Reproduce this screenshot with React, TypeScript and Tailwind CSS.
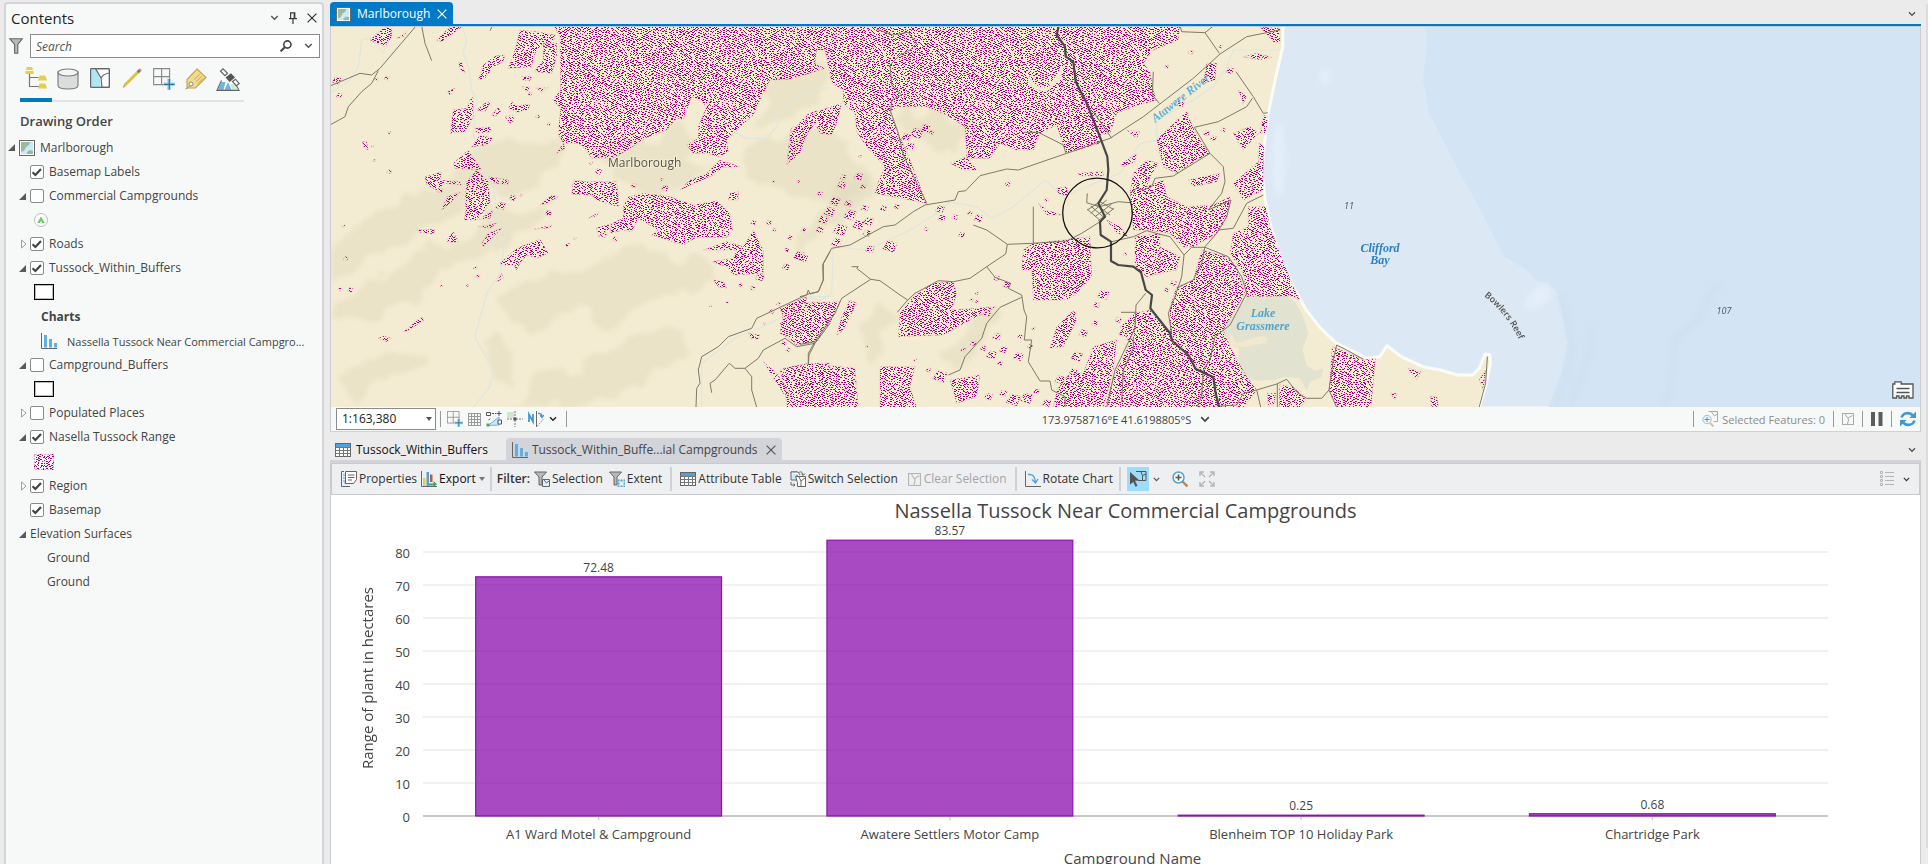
import React from "react";
import type { ReactNode } from "react";

/* ------------------------------------------------------------------ */
/* Small icons                                                         */
/* ------------------------------------------------------------------ */

type IconProps = { className?: string };

function Chevron({ className = "w-[10px] h-[7px] text-[#555]" }: IconProps) {
  return (
    <svg viewBox="0 0 10 7" className={className} fill="none" stroke="currentColor" strokeWidth="1.7">
      <path d="M1.2 1.2 5 5 8.8 1.2" />
    </svg>
  );
}

function Cross({ className = "" }: IconProps) {
  return (
    <svg viewBox="0 0 10 10" className={className} fill="none" stroke="currentColor" strokeWidth="1.2">
      <path d="M.6.6 9.4 9.4M9.4.6.6 9.4" />
    </svg>
  );
}

function PinIcon() {
  return (
    <svg viewBox="0 0 8 12" className="h-3 w-2" fill="none" stroke="#3c3c3c" strokeWidth="1.2">
      <path d="M1.6 6.4V.8h4.2v5.6M0 6.6h8M4 6.6V12M5.2 1v5.4" />
    </svg>
  );
}

function FunnelIcon() {
  return (
    <svg viewBox="0 0 14 16" className="h-4 w-[14px]" fill="#b9b9b9" stroke="#666" strokeWidth="1.1">
      <path d="M.7.7h12.6L8.8 6.5v8.8H5.6V6.5z" />
    </svg>
  );
}

function SearchIcon() {
  return (
    <svg viewBox="0 0 12 12" className="h-3 w-3" fill="none" stroke="#444">
      <circle cx="7.4" cy="4.5" r="3.6" strokeWidth="1.6" />
      <path d="M4.8 7.2.6 11.4" strokeWidth="2" />
    </svg>
  );
}

function DrawingOrderIcon() {
  return (
    <svg viewBox="0 0 24 24" className="h-6 w-6" fill="#e3cf4d">
      <path d="M5.500 8v12.500H15M5.500 11.500h9" fill="none" stroke="#777" strokeWidth="1.2" />
      <path d="M2.800 1h5.400l.8 3H2zM1.400 5h8.200v3H1.400z" />
      <path d="M15.600 9.500h5.800l1.600 5h-9zM15.600 17.500h5.800l1.600 5h-9z" />
    </svg>
  );
}

function DatabaseIcon() {
  return (
    <svg viewBox="0 0 22 22" className="h-[22px] w-[22px]" fill="#dcdcdc" stroke="#777" strokeWidth="1.1">
      <path d="M1 4v13.500c0 2 4 3.500 10 3.500s10-1.500 10-3.500V4z" />
      <ellipse cx="11" cy="4.500" rx="10" ry="3.500" fill="#f5f5f5" />
    </svg>
  );
}

function SelectionMapIcon() {
  return (
    <svg viewBox="0 0 20 20" className="h-5 w-5" fill="none" stroke="#666" strokeWidth="1.2">
      <rect x=".6" y=".6" width="18.800" height="18.800" rx="1" fill="#fff" />
      <path d="M1 1h4.500l4 8 1.500 10.400H1z" fill="#aee6f7" stroke="none" />
      <path d="M5.500.6 11 10l1 9M11 10c2-3.500 5-4.500 8.500-5" />
      <rect x=".6" y=".6" width="18.800" height="18.800" rx="1" />
    </svg>
  );
}

function PencilIcon() {
  return (
    <svg viewBox="0 0 22 22" className="h-[22px] w-[22px]" strokeLinecap="butt">
      <path d="M4 17 17.500 3.500" stroke="#dcc23c" strokeWidth="3" />
      <path d="M16.800 4.200l2.200-2.200" stroke="#777" strokeWidth="3" />
      <path d="M18.700 2.400l1.200-1.200" stroke="#e88b7c" strokeWidth="3" />
      <path d="M3 16l2 2-3.500 2.500z" fill="#c9a183" />
    </svg>
  );
}

function SnapGridIcon({ className = "h-[22px] w-[22px]" }: IconProps) {
  return (
    <svg viewBox="0 0 22 22" className={className} fill="none">
      <path d="M.6.6h16v16h-16zM8.600.6v16M.6 8.600h16" stroke="#888" strokeWidth="1.100" />
      <path d="M16 10.500v11.500M10.500 16.300H22" stroke="#9fd8f5" strokeWidth="3.600" />
      <path d="M16.300 11v10.500M11 16.300h10.500" stroke="#2d6f9c" strokeWidth="1.200" />
    </svg>
  );
}

function TagIcon() {
  return (
    <svg viewBox="0 0 22 22" className="h-[22px] w-[22px]">
      <path d="M12 1 21 9.500 10.500 20H2v-8.500z" fill="#f0dc8c" stroke="#c9a64c" strokeWidth="1.200" />
      <path d="M9 11.500l5.500-5M11 13.500l5.500-5M13 15.500l5-5" stroke="#c9a64c" />
      <circle cx="6" cy="16" r="2" fill="#fff" stroke="#888" />
      <path d="M5 17.500C3 20 1 21 .6 21" stroke="#888" fill="none" />
    </svg>
  );
}

function SatelliteIcon() {
  return (
    <svg viewBox="0 0 24 24" className="h-6 w-6" fill="none" stroke="#666" strokeWidth="1.200">
      <path d="M5.500 12.500 1 22.400h22l-3.500-6.500" fill="#fff" />
      <path d="M5.500 14h4l-2 8H2zM12 14l3.500 8H8.500z" fill="#6db5e5" stroke="none" />
      <path d="M14.500 16h4l4 6h-6z" fill="#c8e9d8" stroke="none" />
      <path d="M1 22.400h22" />
      <path d="M9.500 9.500l5.500-4.300 4 4.300-5.300 4.500z" fill="#555" stroke="none" />
      <path d="M4.500 3.300 7 .9l4.500 4.300L9 7.600zM16.500 13.500l3-2.300 3.800 4.300-3 2.300z" fill="#fff" />
    </svg>
  );
}

function MapTile({ className = "h-4 w-4" }: IconProps) {
  return (
    <svg viewBox="0 0 16 16" className={className}>
      <rect x=".5" y=".5" width="15" height="15" fill="#fff" stroke="#666" />
      <rect x="2" y="2" width="12" height="12" fill="#cfe8f7" />
      <path d="M2 2h9l-1 3-3 2-2 4-3 1zM8 12l3-2 3 1v3H8z" fill="#96bd9d" />
    </svg>
  );
}

function ColumnsIcon({ className = "h-4 w-4" }: IconProps) {
  return (
    <svg viewBox="0 0 16 16" className={className} fill="none">
      <path d="M.5 0v15.500H16" stroke="#666" />
      <path d="M3 2h3v12.500H3zM8 6h3v8.500H8zM13 10h3v4.500h-3z" fill="#61aee0" />
    </svg>
  );
}

function TableIcon() {
  return (
    <svg viewBox="0 0 16 14" className="h-[14px] w-4 shrink-0" fill="none">
      <rect x=".5" y=".5" width="15" height="13" fill="#fff" stroke="#666" />
      <path d="M1 1h14v3H1z" fill="#4fa3da" />
      <path d="M.5 4.500h15M.5 7.500h15M.5 10.500h15M4.500 4v10M8.500 4v10M12.500 4v10" stroke="#777" />
    </svg>
  );
}

function SelTile({ className = "h-3 w-3", stroke = "#aaa" }: IconProps & { stroke?: string }) {
  return (
    <svg viewBox="0 0 12 12" className={className} fill="none" stroke={stroke}>
      <rect x=".5" y=".5" width="11" height="11" />
      <path d="M3.500 1c0 3 3 3 3 6L5.500 11M6 5 10.500 2.500" />
    </svg>
  );
}

/* ------------------------------------------------------------------ */
/* Contents pane                                                       */
/* ------------------------------------------------------------------ */

function Expander({ open }: { open: boolean }) {
  return (
    <button aria-label={open ? "Collapse" : "Expand"} className="flex h-4 w-[11px] shrink-0 items-center">
      {open ? (
        <svg viewBox="0 0 7 7" className="h-[7px] w-[7px]" fill="#595959">
          <path d="M7 0v7H0z" />
        </svg>
      ) : (
        <svg viewBox="0 0 6 10" className="ml-[2px] h-[10px] w-[6px]" fill="#fff" stroke="#999">
          <path d="M.6 1v8l4.400-4z" />
        </svg>
      )}
    </button>
  );
}

function Layer({ name, checked, open }: { name: string; checked: boolean; open?: boolean }) {
  return (
    <li className="flex h-6 items-center pl-[13px]">
      {open === undefined ? <span className="w-[11px] shrink-0" /> : <Expander open={open} />}
      <label className="flex items-center gap-[5px]">
        <span className="relative flex">
          <input
            type="checkbox"
            defaultChecked={checked}
            className="peer h-[14px] w-[14px] appearance-none rounded-[2px] border border-[#8a8a8a] bg-white"
          />
          <svg
            viewBox="0 0 14 14"
            className="pointer-events-none absolute inset-0 hidden h-[14px] w-[14px] peer-checked:block"
            fill="none"
            stroke="#444"
            strokeWidth="2.200"
          >
            <path d="M2.600 7.200 5.400 10 11 4" />
          </svg>
        </span>
        {name}
      </label>
    </li>
  );
}

function BoxSymbol() {
  return (
    <li className="flex h-6 items-center pl-7">
      <svg viewBox="0 0 20 16" className="h-4 w-5" fill="none">
        <rect x=".5" y=".5" width="19" height="15" fill="#fff" stroke="#000" />
        <rect x="1.500" y="1.500" width="17" height="13" stroke="#bbb" />
      </svg>
    </li>
  );
}

const paneTools: { label: string; icon: ReactNode }[] = [
  { label: "List By Drawing Order", icon: <DrawingOrderIcon /> },
  { label: "List By Data Source", icon: <DatabaseIcon /> },
  { label: "List By Selection", icon: <SelectionMapIcon /> },
  { label: "List By Editing", icon: <PencilIcon /> },
  { label: "List By Snapping", icon: <SnapGridIcon /> },
  { label: "List By Labeling", icon: <TagIcon /> },
  { label: "List By Perspective Imagery", icon: <SatelliteIcon /> },
];

function ContentsPane() {
  return (
    <aside className="mt-[2px] ml-1 flex w-[320px] shrink-0 flex-col rounded-t-[4px] border-2 border-b-0 border-[#d3d5d9] bg-[#f7f9f9]">
      <header className="flex h-[30px] items-center pr-[5px] pb-[2px] pl-[5px]">
        <h1 className="flex-1 text-[15px] text-[#1f1f1f]">Contents</h1>
        <button aria-label="Pane options">
          <Chevron className="h-[6px] w-[9px] text-[#555]" />
        </button>
        <button aria-label="Auto hide" className="ml-[10px]">
          <PinIcon />
        </button>
        <button aria-label="Close pane" className="ml-[10px]">
          <Cross className="h-[10px] w-[10px] text-[#333]" />
        </button>
      </header>

      <div className="flex items-center gap-[7px] pr-[2px] pl-[3px]">
        <FunnelIcon />
        <div className="flex h-6 flex-1 items-center border border-[#8b8b8b] bg-white pr-[6px] pl-[5px]">
          <input
            type="text"
            aria-label="Search layers"
            placeholder="Search"
            className="w-0 flex-1 bg-transparent text-[12px] italic outline-none placeholder:text-[#555]"
          />
          <button aria-label="Search">
            <SearchIcon />
          </button>
          <button aria-label="Search options" className="ml-3">
            <Chevron className="h-[6px] w-[9px] text-[#555]" />
          </button>
        </div>
      </div>

      <nav className="mt-2 ml-[14px] flex">
        {paneTools.map((tool, i) => (
          <button
            key={tool.label}
            aria-label={tool.label}
            className={
              i === 0
                ? "flex h-9 w-8 items-start justify-center border-b-4 border-[#0079c1]"
                : "flex h-9 w-8 items-start justify-center border-b-2 border-[#e2e4e4] pt-[2px]"
            }
          >
            {tool.icon}
          </button>
        ))}
      </nav>

      <h2 className="mt-[9px] ml-[14px] text-[13px] leading-5 font-semibold text-[#444]">Drawing Order</h2>

      <ul className="mt-1 text-[12px] text-[#444]">
        <li className="flex h-[25px] items-center pl-[2px]">
          <Expander open />
          <MapTile />
          <span className="ml-[5px]">Marlborough</span>
        </li>
        <Layer name="Basemap Labels" checked />
        <Layer name="Commercial Campgrounds" checked={false} open />
        <li className="flex h-6 items-center pl-7">
          <svg viewBox="0 0 14 14" className="h-[14px] w-[14px]">
            <circle cx="7" cy="7" r="6.500" fill="#fff" stroke="#bbb" />
            <path d="M7 3.500 10.800 10H8.200L7 7.800 5.800 10H3.200z" fill="#6ccb5f" />
          </svg>
        </li>
        <Layer name="Roads" checked open={false} />
        <Layer name="Tussock_Within_Buffers" checked open />
        <BoxSymbol />
        <li className="flex h-[25px] items-center pl-[35px] font-bold">Charts</li>
        <li className="flex h-6 items-center gap-[10px] pl-[35px] text-[11px]">
          <ColumnsIcon className="h-4 w-4 shrink-0" />
          <span className="whitespace-nowrap">Nassella Tussock Near Commercial Campgro...</span>
        </li>
        <Layer name="Campground_Buffers" checked={false} open />
        <BoxSymbol />
        <Layer name="Populated Places" checked={false} open={false} />
        <Layer name="Nasella Tussock Range" checked open />
        <li className="flex h-[25px] items-center pl-7">
          <svg viewBox="0 0 20 16" className="h-4 w-5" shapeRendering="crispEdges">
            <rect width="20" height="16" fill="#fff" />
            <path d={SWATCH_DOTS} fill="#a80084" />
            <rect x=".5" y=".5" width="19" height="15" fill="none" stroke="#e6a0c4" strokeDasharray="2 1" />
          </svg>
        </li>
        <Layer name="Region" checked open={false} />
        <Layer name="Basemap" checked />
        <li className="flex h-6 items-center pl-[13px] font-medium">
          <Expander open />
          Elevation Surfaces
        </li>
        <li className="flex h-6 items-center pl-[41px]">Ground</li>
        <li className="flex h-6 items-center pl-[41px]">Ground</li>
      </ul>
    </aside>
  );
}

/* ------------------------------------------------------------------ */
/* Map                                                                 */
/* ------------------------------------------------------------------ */

/** Deterministic stipple of one-pixel-high dashes, as path data. */
function stipple(width: number, height: number, seed: number): string {
  let s = seed;
  const rnd = () => {
    s = (s + 0x6d2b79f5) | 0;
    let t = Math.imul(s ^ (s >>> 15), 1 | s);
    t = (t + Math.imul(t ^ (t >>> 7), 61 | t)) ^ t;
    return ((t ^ (t >>> 14)) >>> 0) / 4294967296;
  };
  let prev = new Set<number>();
  let d = "";
  for (let y = 0; y < height; y++) {
    const row = new Set<number>();
    let x = Math.floor(rnd() * 4);
    while (x < width) {
      const len = rnd() < 0.5 ? 2 : 1;
      let clash = false;
      for (let k = 0; k < len; k++) if (prev.has(x + k)) clash = true;
      if ((!clash || rnd() < 0.12) && x + len <= width) {
        d += `M${x} ${y}h${len}v1h-${len}z`;
        for (let k = 0; k < len; k++) row.add(x + k);
        x += len + 1 + Math.floor(rnd() * 4);
      } else {
        x += 1 + Math.floor(rnd() * 4);
      }
    }
    prev = row;
  }
  return d;
}

const DOTS = stipple(128, 128, 7);
const SWATCH_DOTS = stipple(20, 16, 11);

/** Digitising sheets: each has its own origin and units per pixel. */
const sheet = (originX: number, unitsX: number) => (points: string) =>
  points
    .split(" ")
    .map((p) => {
      const [x, y] = p.split(",").map(Number);
      return `${(originX + x / unitsX).toFixed(1)},${(y / 3).toFixed(1)}`;
    })
    .join(" ");

const west = sheet(330, 3);
const centre = sheet(800, 3);
const east = sheet(1250, 2.313);

const sea = east(
  "76,75 76,140 60,230 42,340 32,450 28,520 35,600 48,680 70,770 100,860 130,930 160,980 200,1030 240,1055 270,1075 300,1070 317,1037 350,1070 400,1100 440,1110 480,1125 515,1125 530,1105 544,1062 555,1064 556,1090 547,1150 530,1224 3600,1224 3600,75",
);
const deepSea = east(
  "405,75 410,130 400,240 415,340 450,430 490,530 530,620 560,700 590,770 640,810 662,842 690,850 712,880 722,940 735,1030 722,1110 690,1224 3600,1224 3600,75",
);
const lake = centre(
  "1340,890 1460,888 1485,905 1510,950 1525,1000 1508,1050 1520,1095 1545,1112 1570,1105 1565,1130 1530,1145 1520,1172 1500,1135 1455,1130 1420,1140 1375,1142 1330,1130 1315,1085 1318,1045 1290,1035 1278,1000 1262,1010 1290,960 1310,935",
);

const hills: string[] = [
  west("0,740 80,680 180,600 330,555 420,470 560,400 670,420 690,500 620,540 500,580 380,640 240,720 100,800 0,820"),
  west("0,880 160,830 300,750 420,700 500,620 660,580 640,640 500,720 360,800 240,900 60,980 0,960"),
  west("520,900 640,840 720,800 840,770 960,745 1080,800 1180,850 1120,880 980,890 860,960 740,940 640,985 560,960"),
  west("800,480 900,440 1000,400 1060,370 1100,400 1060,450 1150,500 1050,570 950,590 880,560 820,520"),
  west("1290,330 1320,250 1420,235 1490,210 1500,270 1400,300 1330,360 1260,390"),
  west("1230,460 1330,420 1400,360 1480,380 1560,460 1640,520 1560,620 1440,600 1300,560"),
  west("0,1130 120,1080 260,1060 300,1090 200,1150 60,1200"),
  west("440,1060 500,1010 560,1050 540,1120 470,1110"),
  west("560,1220 640,1120 760,1080 900,1020 1080,1000 1090,1060 960,1120 860,1180 720,1220"),
  centre("300,330 400,330 480,380 490,460 420,470 340,420"),
  centre("40,640 120,560 220,500 240,560 180,620 80,700 0,740"),
  centre("400,1100 460,1020 540,960 600,930 600,1000 520,1100"),
  centre("240,900 300,960 250,1080 210,1080 200,980"),
];

const tussockBlocks: string[] = [
  west("672,78 690,110 692,270 668,300 692,325 684,400 700,430 745,430 765,445 785,475 855,472 900,445 945,415 1010,390 1040,355 1060,358 1085,290 1110,300 1130,320 1105,380 1105,415 1070,435 1090,460 1130,460 1170,470 1195,455 1190,420 1230,380 1270,345 1290,300 1320,240 1380,238 1440,220 1485,205 1450,190 1460,145 1490,150 1530,78"),
  centre("-10,78 770,78 1140,78 1135,120 1060,150 1030,190 1050,215 1060,270 1070,300 1000,320 950,340 930,400 900,405 900,430 800,460 790,435 770,375 720,400 700,450 650,450 600,430 570,475 500,475 495,380 440,345 380,320 290,320 270,335 295,400 330,480 380,610 330,600 225,580 235,545 255,500 200,440 170,395 165,340 130,310 130,270 95,250 85,200 75,150 50,150 45,195 0,215"),
  centre("20,345 125,310 110,370 95,405 60,400 45,370 10,420 0,440 -40,495 -30,400"),
  centre("1160,335 1180,385 1205,430 1230,460 1190,480 1130,520 1090,500 1070,420 1110,380"),
  centre("1040,480 1075,490 1050,530 1040,560 1090,540 1100,590 1160,620 1240,615 1290,590 1280,660 1250,700 1180,740 1150,740 1110,700 1040,690 1000,690 990,580 1000,520"),
  centre("1300,400 1350,380 1375,400 1330,450"),
  centre("1300,550 1370,490 1390,480 1390,570 1330,600"),
  centre("1165,540 1260,520 1250,545 1180,560"),
  centre("1345,620 1398,620 1410,680 1440,760 1480,860 1500,900 1470,888 1340,890 1330,820 1290,760 1300,700 1345,680"),
  centre("1205,750 1280,770 1310,800 1335,880 1270,990 1290,1040 1340,1130 1370,1170 1330,1222 1200,1222 1210,1120 1170,1080 1110,1000 1110,920 1130,860 1180,840"),
  centre("1005,710 1080,700 1080,820 1040,830 1005,800"),
  centre("1080,740 1140,770 1130,810 1080,820"),
  centre("700,730 870,710 875,830 830,880 800,900 700,900 695,810 665,810 670,750"),
  centre("400,850 460,845 470,880 455,930 590,920 510,960 430,1005 295,1010 300,940 340,890"),
  centre("0,910 120,905 95,960 50,1025 0,1035 -60,1000 -50,940"),
  centre("150,900 170,910 130,990 110,1005 125,950"),
  centre("-50,1105 25,1090 165,1105 175,1222 -40,1222"),
  centre("240,1100 345,1100 330,1160 350,1222 240,1222"),
  centre("450,1140 540,1125 530,1190 470,1210"),
  centre("815,935 830,960 790,1040 750,1045 770,980"),
  centre("880,1040 950,1020 940,1110 910,1222 760,1222 770,1170 810,1120 850,1120"),
  centre("960,980 1005,940 1050,930 1100,990 1160,1060 1190,1110 1240,1130 1255,1222 915,1222 940,1130 990,1030"),
  centre("1380,81 1440,85 1440,130 1420,125"),
  centre("1330,170 1370,160 1415,172 1380,180"),
  centre("1315,270 1340,290 1330,310"),
  centre("1220,190 1250,190 1245,240 1210,250"),
  centre("1378,430 1392,440 1388,520 1375,500"),
  centre("1390,345 1402,350 1400,400 1380,400"),
  centre("980,390 1020,395 1010,415"),
  centre("960,495 1010,460 1005,485 970,500"),
  centre("835,520 910,515 910,527 840,527"),
  centre("450,490 500,470 530,510 490,510"),
  centre("770,565 800,560 805,590 775,580"),
  centre("715,610 740,630 785,645 740,645"),
  centre("920,660 960,680 985,710 950,700"),
  east("190,1040 230,1060 262,1080 290,1075 280,1222 200,1222 183,1170"),
  east("68,1155 100,1160 130,1200 115,1222 68,1222"),
  east("40,1180 60,1180 55,1215 42,1215"),
  east("530,1140 545,1110 540,1170"),
  east("365,1105 395,1115 385,1140"),
  east("417,1190 432,1190 436,1220 420,1220"),
  east("325,1180 340,1180 335,1200"),
  west("120,120 155,88 185,78 185,110 165,140"),
  west("200,115 230,95 220,110"),
  west("320,120 350,90 365,78 395,81 370,100 335,125"),
  west("570,90 620,95 675,105 670,130 640,130 615,160 605,200 535,205 555,150"),
  west("640,130 680,130 680,170 665,220 612,215 640,180"),
  west("445,240 460,195 495,168 525,165 520,185 490,200 465,235"),
  west("385,190 395,185 405,220 392,210"),
  west("575,228 605,230 600,242 578,240"),
  west("575,260 600,262 590,275"),
  west("620,265 655,263 635,277"),
  west("352,275 375,265 360,285"),
  west("370,330 410,325 420,300 430,290 430,350 405,395 360,400"),
  west("440,330 470,305 480,310 465,335"),
  west("485,345 505,322 512,335 495,350"),
  west("535,325 545,305 560,318 600,312 595,330 560,337"),
  west("525,350 550,345 552,362 540,370"),
  west("435,385 480,382 485,395 440,400"),
  west("425,440 450,405 490,415 470,435"),
  west("370,490 415,450 435,480 455,510 375,505"),
  west("285,530 335,515 330,540 390,545 395,555 345,550 320,570 290,555"),
  west("405,600 410,545 440,510 475,545 480,610 440,660 403,660 408,630"),
  west("475,530 535,540 535,555 485,548"),
  west("335,630 350,590 390,577 360,610"),
  west("445,660 490,630 480,655"),
  west("445,680 500,670 480,685"),
  west("455,730 475,700 515,685 490,710 460,740"),
  west("260,690 315,688 310,702 268,697"),
  west("350,720 370,695 385,725 355,728"),
  west("510,790 560,745 630,718 655,760 620,775 590,765 570,790 560,810 550,795 515,795"),
  west("500,845 515,820 520,835"),
  west("730,540 770,545 860,545 865,590 865,620 800,600 785,585 725,583"),
  west("880,620 895,590 940,580 1020,590 1090,615 1160,603 1200,640 1208,690 1190,712 1100,712 1060,735 965,705 985,690 950,670 925,655 905,695 880,690 840,700 845,670 880,655"),
  west("1050,570 1080,540 1130,520 1170,480 1230,500 1180,502 1150,525"),
  west("1120,750 1190,725 1240,740 1270,690 1300,750 1300,820 1210,825 1190,800 1145,785 1210,775 1220,750"),
  west("1150,840 1180,845 1190,865 1165,860"),
  west("680,460 700,430 705,445"),
  west("630,615 665,585 685,590 645,612"),
  west("800,683 850,670 840,685 805,712"),
  west("775,655 805,638 800,648"),
  west("612,688 665,675 660,684"),
  west("220,995 275,950 282,960 235,992"),
  west("145,1015 160,1008 185,1015 170,1025"),
  west("97,425 110,425 115,450 103,445"),
  west("1255,1000 1290,1005 1285,1018 1262,1015"),
  west("1350,925 1430,890 1425,930 1360,950"),
  west("1350,970 1450,905 1500,910 1500,960 1450,1020 1400,1035 1370,1010"),
  west("1350,1110 1440,1090 1500,1090 1500,1222 1390,1222 1360,1150"),
  west("1300,1085 1340,1120 1400,1210 1360,1180"),
  west("1375,490 1400,440 1420,400 1430,345 1460,330 1440,380 1410,460"),
  west("1195,600 1200,580 1225,575 1225,600 1205,600"),
];

/** Isolated patches: x, y and half-width in sheet units. */
const westSpecks: [number, number, number][] = [
  [28, 287, 9], [20, 242, 14], [140, 238, 6], [170, 234, 8], [600, 282, 6], [623, 350, 7], [657, 373, 6],
  [178, 398, 5], [128, 440, 4], [132, 481, 4], [178, 515, 8], [330, 572, 9], [548, 594, 11], [574, 587, 5],
  [512, 618, 15], [655, 640, 11], [41, 678, 5], [47, 776, 8], [60, 870, 9], [30, 867, 5], [436, 804, 6],
  [444, 830, 7], [335, 858, 4], [412, 857, 4], [713, 735, 7], [735, 715, 5], [805, 515, 11], [783, 490, 5],
  [911, 557, 9], [1005, 565, 11], [995, 539, 5], [855, 717, 9], [820, 704, 11], [1330, 545, 4], [1405, 545, 5],
  [1392, 388, 11], [1270, 668, 8], [1317, 668, 9], [1333, 690, 6], [1420, 690, 8], [1380, 713, 8],
  [1370, 750, 7], [1408, 768, 18], [1368, 801, 12], [1232, 855, 7], [1290, 832, 14], [1268, 865, 8],
  [1142, 918, 4], [1192, 907, 4], [1345, 912, 6], [1325, 935, 8], [1303, 970, 4], [1375, 1050, 8], [1360, 1030, 8],
];
const centreSpecks: [number, number, number][] = [
  [350, 400, 20], [375, 385, 16], [318, 412, 14], [330, 440, 14], [395, 397, 8], [180, 470, 5], [175, 530, 14],
  [125, 555, 14], [60, 582, 9], [130, 532, 10], [190, 560, 9], [105, 605, 16], [145, 610, 12], [88, 635, 18],
  [150, 645, 20], [175, 675, 18], [120, 690, 22], [70, 660, 16], [205, 665, 16], [195, 625, 12], [110, 728, 16],
  [60, 690, 12], [200, 700, 12], [250, 625, 10], [290, 620, 9], [270, 740, 22], [210, 748, 14], [10, 775, 14],
  [420, 628, 14], [425, 655, 12], [465, 652, 10], [510, 640, 8], [535, 655, 14], [378, 688, 7], [485, 705, 10],
  [622, 553, 9], [740, 600, 7], [590, 835, 10], [620, 855, 12], [530, 880, 5], [515, 900, 6], [530, 905, 5],
  [910, 885, 18], [890, 915, 10], [885, 970, 10], [850, 1000, 14], [830, 1070, 18], [820, 940, 8], [590, 1010, 14],
  [610, 1050, 12], [575, 1065, 16], [550, 1045, 10], [520, 1030, 10], [490, 1050, 8], [655, 1070, 16],
  [690, 1040, 8], [600, 1090, 8], [420, 1130, 22], [385, 1110, 8], [565, 1190, 13], [610, 1180, 12],
  [640, 1200, 22], [680, 1195, 20], [710, 1175, 10], [740, 1210, 14], [200, 1040, 4], [345, 1080, 5],
  [780, 1140, 16], [820, 1115, 12], [970, 1000, 14], [975, 763, 6], [1172, 157, 8], [1262, 140, 6],
  [1290, 212, 12], [1270, 390, 8], [1220, 400, 10], [1240, 415, 10], [1140, 310, 14], [1100, 200, 6],
  [560, 940, 14], [700, 985, 6], [660, 1010, 8], [955, 960, 10], [1100, 870, 8], [1120, 850, 10],
];
const diamonds = (list: [number, number, number][], place: (p: string) => string) =>
  list.map(([x, y, r]) =>
    place(`${x - r},${y + r / 3} ${x - r / 3},${y - r * 0.8} ${x + r},${y - r / 2} ${x + r / 2},${y + r * 0.8}`),
  );

const tussock = [...tussockBlocks, ...diamonds(westSpecks, west), ...diamonds(centreSpecks, centre)];

const clearings: string[] = [
  centre("680,215 700,250 720,262 745,262 775,215 795,190 780,240 740,275 705,270 688,250"),
  west("620,150 638,130 635,170 620,190"),
];

const highway = centre(
  "776,78 770,105 795,140 797,170 820,185 827,245 858,305 890,385 922,470 925,510 920,570 895,610 915,650 900,665 902,705 933,725 933,783 955,795 1000,800 1023,817 1037,870 1056,885 1051,925 1110,1000 1117,1023 1165,1065 1187,1107 1240,1132 1247,1180 1258,1224",
);

const roads: string[] = [
  centre("0,890 20,885 25,870 30,882 55,875 70,840 70,790 95,745 150,735 250,680 285,675 340,635 375,615 465,600 475,575 497,572 540,527 620,507 655,510 800,460 930,415 1030,350 1180,235 1260,162 1340,110 1440,90"),
  centre("230,88 280,105 325,97 350,130 330,150 300,165 270,195 275,255 305,285 275,300 272,335 295,400 310,465 380,610"),
  centre("520,675 560,690 622,733 700,730 800,723 845,700 900,665"),
  centre("622,733 617,762 560,800 510,835 460,845 415,842 345,880 323,900 292,937"),
  centre("155,800 175,800 170,805 212,838 125,895 105,940 45,1025 25,1060 25,1095"),
  centre("212,838 240,842 300,885 323,900"),
  centre("45,1025 0,1033"),
  centre("560,800 585,832 632,850 625,865 665,885 672,930 680,950 673,1020 695,1020 685,1085 720,1143 750,1143 755,1170 795,1190 795,1222"),
  centre("665,892 600,922 560,970 545,1015 495,1070 480,1110 445,1125"),
  centre("670,397 715,397 790,435 798,460"),
  centre("935,415 880,335"),
  centre("700,620 700,730"),
  centre("1060,215 1057,285 1078,310"),
  centre("1140,78 1145,95 1215,98 1258,160"),
  centre("1215,98 1240,78"),
  centre("1308,215 1360,290 1390,340 1403,338"),
  centre("1357,295 1340,320 1255,365 1183,382 1230,460 1120,528 1065,535 1055,560 1030,570 1010,565 990,580"),
  centre("1230,460 1270,500 1275,545 1265,580 1225,630 1293,600 1280,650 1250,700 1215,740 1205,790 1180,840 1130,865"),
  centre("935,725 1000,710 1040,692 1080,703 1110,710 1152,765 1175,742 1215,742 1285,770 1325,830 1340,880 1290,975 1245,1010 1230,1080 1210,1110 1205,1190 1190,1222"),
  centre("1152,765 1145,830 1125,890 1105,940 1115,1000"),
  centre("1037,880 1008,915 1005,985 945,1110 920,1222"),
  centre("1000,1010 1000,1045 970,1110 965,1205"),
  centre("963,937 1010,937"),
  centre("1255,690 1300,685 1340,610 1390,585"),
  centre("1260,1218 1310,1215 1330,1180 1370,1170 1430,1152 1460,1138 1492,1178 1520,1195 1565,1195 1587,1170 1600,1080 1610,1035 1640,1050 1690,1078"),
  centre("1370,1170 1382,1222"),
  centre("1432,1152 1432,1222"),
  centre("1587,1170 1610,1222"),
  east("549,1070 545,1150 530,1222"),
  centre("862,580 860,608 898,620 955,605 990,608"),
  west("258,78 150,205 125,225 90,220 0,258"),
  west("145,212 125,250 95,275 55,320 45,350 0,375"),
  west("275,78 285,130 305,182"),
  west("487,78 480,92"),
  west("1500,755 1478,795 1480,840 1465,875 1435,882 1280,955 1265,985 1195,1010 1165,1040 1115,1070 1105,1110 1110,1150 1100,1165 1098,1222"),
  west("1145,1178 1140,1150 1155,1140 1198,1090 1215,1105 1245,1105 1285,1075 1300,1050 1365,1015 1400,1040 1455,1030 1500,970"),
  west("1245,1105 1265,1130 1265,1170 1280,1222"),
  west("1455,1030 1437,1065 1435,1095"),
];

const streets: string[] = [
  centre("862,628 905,665"), centre("872,618 915,655"), centre("885,612 930,645"), centre("900,605 940,628"),
  centre("862,630 900,605"), centre("872,640 920,600"), centre("885,650 935,612"), centre("895,662 942,625"),
];

const rivers: string[] = [
  west("395,78 410,120 400,160 415,200 425,270 440,300 430,400 450,480 490,560 500,650 525,720 510,820 470,880 435,1010 490,1110 480,1160 430,1222"),
  west("0,280 60,240 85,200 95,120 120,115 160,158 185,110"),
  west("1220,400 1250,415 1310,415 1340,380 1350,330 1390,300 1440,270 1500,262"),
  west("1115,1222 1115,1090 1220,1010 1300,980 1380,940 1440,890 1500,890"),
  centre("0,890 60,900 95,880 100,740 200,750 330,690 410,640 450,605 530,620 575,655 640,620 735,540 790,590 860,560 960,520 1020,430 1070,420 1070,360 1180,300 1240,260 1280,200 1300,150 1440,150"),
];

const seaFloor: string[] = [
  east("715,880 735,960 745,1050 730,1140 705,1224"),
  east("790,980 785,1060 760,1150 740,1224"),
  east("1090,845 1060,890 1040,960 985,1010 975,1130 960,1224"),
];

function MapLabel(props: React.SVGProps<SVGTextElement>) {
  return (
    <text
      fontFamily="'Liberation Serif', serif"
      fontSize="12"
      fontStyle="italic"
      fontWeight="bold"
      textAnchor="middle"
      {...props}
    />
  );
}

function MapCanvas() {
  return (
    <div className="relative h-[380px] overflow-hidden bg-[#d4e4f4]">
      <svg viewBox="331 27 1589 380" preserveAspectRatio="xMinYMin slice" className="h-full w-full" role="img" aria-label="Marlborough map">
        <defs>
          <pattern id="tussock" width="128" height="128" patternUnits="userSpaceOnUse">
            <path d={DOTS} fill="#a80084" shapeRendering="crispEdges" />
          </pattern>
          <filter id="relief" filterUnits="userSpaceOnUse" x="331" y="27" width="760" height="380">
            <feTurbulence type="fractalNoise" baseFrequency=".022" numOctaves="4" seed="4" result="noise" />
            <feDisplacementMap in="SourceGraphic" in2="noise" scale="46" xChannelSelector="R" yChannelSelector="G" />
            <feGaussianBlur stdDeviation="2.500" />
          </filter>
          <filter id="faint" x="-50%" y="-20%" width="200%" height="140%">
            <feGaussianBlur stdDeviation="3" />
          </filter>
          <path id="reef" d="M1484 296Q1508 315 1520 342" />
        </defs>

        <rect x="331" y="27" width="1589" height="380" fill="#f4ecd2" />
        <g fill="#e2dabd" fillOpacity=".5" filter="url(#relief)">
          {hills.map((p, i) => (
            <polygon key={i} points={p} />
          ))}
        </g>
        <g fill="none" stroke="#dfe6dd" strokeWidth="1.200">
          {rivers.map((p, i) => (
            <polyline key={i} points={p} />
          ))}
        </g>

        <polygon points={sea} fill="#dce8f4" stroke="#fbfbf8" strokeWidth="3" strokeLinejoin="round" />
        <polygon points={deepSea} fill="#d3e4f4" />
        <g fill="none" stroke="#c9daeb" strokeOpacity=".5" strokeWidth="4" filter="url(#faint)">
          {seaFloor.map((p, i) => (
            <polyline key={i} points={p} />
          ))}
        </g>
        <g fill="#e6f1fb" fillOpacity=".7" filter="url(#faint)">
          <ellipse cx="1325" cy="77" rx="6" ry="9" />
          <ellipse cx="1279" cy="160" rx="7" ry="38" />
          <ellipse cx="1538" cy="298" rx="16" ry="9" transform="rotate(-40 1538 298)" />
        </g>
        <polygon points={lake} fill="#e1e3d0" />
        <polygon points={centre("1290,1000 1312,1030 1340,1020 1385,1008 1405,1015 1395,1030 1330,1042 1290,1035")} fill="#f1e8cd" />

        <g fill="url(#tussock)">
          {tussock.map((p, i) => (
            <polygon key={i} points={p} />
          ))}
        </g>
        <g fill="none" stroke="#d98a9c" strokeOpacity=".5" strokeWidth=".8" strokeDasharray="2 1.500">
          {tussock.map((p, i) => (
            <polygon key={i} points={p} />
          ))}
        </g>
        <g fill="#f2ead0">
          {clearings.map((p, i) => (
            <polygon key={i} points={p} />
          ))}
        </g>

        <g fill="none" stroke="#7c7967" strokeWidth="1" strokeLinejoin="round">
          {roads.map((p, i) => (
            <polyline key={i} points={p} />
          ))}
          {streets.map((p, i) => (
            <polyline key={i} points={p} />
          ))}
        </g>
        <polyline points={highway} fill="none" stroke="#474747" strokeWidth="2.200" strokeLinejoin="round" />
        <circle cx="1097.500" cy="213" r="34.800" fill="none" stroke="#111" strokeWidth="1.300" />

        <text x="608" y="167" fontSize="12" fill="#55534a" stroke="#f4ecd2" strokeWidth="2" paintOrder="stroke">
          Marlborough
        </text>
        <MapLabel fill="#5db0d6" transform="translate(1183 101) rotate(-38)">Atawere River</MapLabel>
        <MapLabel fill="#4fa6cf">
          <tspan x="1263" y="317">Lake</tspan>
          <tspan x="1263" y="330">Grassmere</tspan>
        </MapLabel>
        <MapLabel fill="#2b80c4" x="1380" y="252">Clifford</MapLabel>
        <MapLabel fill="#2b80c4" x="1380" y="264">Bay</MapLabel>
        <g fontSize="9" fontStyle="italic" fill="#555" textAnchor="middle">
          <text x="1349" y="209">11</text>
          <text x="1724" y="314">107</text>
        </g>
        <text fontSize="9" fontWeight="600" fill="#555">
          <textPath href="#reef">Bowlers Reef</textPath>
        </text>
      </svg>

      <button aria-label="Map notes" className="absolute right-[6px] bottom-2">
        <svg viewBox="0 0 22 18" className="h-[18px] w-[22px]" fill="#fff" stroke="#555" strokeWidth="1.300">
          <path d="M.8 17V3h2V.8h6.400V3H21v14h-4v-2h-2.500v2H12v-2H9.500v2H7v-2H4.500v2z" />
          <path d="M4.500 7.500h13M4.500 11.500h13" />
        </svg>
      </button>
    </div>
  );
}

/* ------------------------------------------------------------------ */
/* Map status bar                                                      */
/* ------------------------------------------------------------------ */

function Rule() {
  return <span className="h-4 w-px shrink-0 bg-[#999]" />;
}

function MapStatusBar() {
  return (
    <div className="flex h-[25px] items-center border-b border-[#cfd2d5] bg-[#f7f9f8] pr-1 pl-[5px] text-[11px] text-[#444]">
      <div className="flex flex-1 items-center">
        <label className="relative flex">
          <select aria-label="Map scale" className="h-[22px] w-[100px] appearance-none border border-[#8b8b8b] bg-white pl-[5px] text-[12px] text-[#222]">
            <option>1:163,380</option>
          </select>
          <svg viewBox="0 0 6 4" className="pointer-events-none absolute top-[9px] right-1 h-1 w-[6px]" fill="#555">
            <path d="M0 0h6L3 4z" />
          </svg>
        </label>
        <span className="ml-1 flex items-center gap-[5px]">
          <Rule />
          <button aria-label="Snapping" className="ml-[1px]">
            <SnapGridIcon className="h-4 w-4" />
          </button>
          <button aria-label="Grid">
            <svg viewBox="0 0 13 13" className="h-[13px] w-[13px]" fill="none" stroke="#999" shapeRendering="crispEdges">
              <path d="M.5 0v13M3.500 0v13M6.500 0v13M9.500 0v13M12.500 0v13M0 .5h13M0 3.500h13M0 6.500h13M0 9.500h13M0 12.500h13" />
            </svg>
          </button>
          <button aria-label="Dynamic constraints">
            <svg viewBox="0 0 16 16" className="h-4 w-4" fill="none" stroke="#555">
              <path d="M2 14.500 13 6v8z" fill="#c6e6f8" stroke="#6cb6e4" />
              <path d="M.5 1.500h4v3h-4zM12 9h3.500v4H12z" fill="#fff" />
              <path d="M6 2.500h4M4 7.500 2 10" strokeDasharray="2 1" />
              <path d="M10.500 2.500h5M13 0v5" />
              <path d="M.5 12.500h3v3h-3z" fill="#5aa469" stroke="none" />
            </svg>
          </button>
          <button aria-label="Inference">
            <svg viewBox="0 0 16 16" className="h-4 w-4" fill="none">
              <path d="M0 1h7v6H0z" fill="#cfe8c9" />
              <path d="M8 0v16M0 8h16" stroke="#777" strokeDasharray="2 1" />
              <path d="M6.500 6.500h3v3h-3z" fill="#555" />
            </svg>
          </button>
          <button aria-label="North orientation">
            <svg viewBox="0 0 16 16" className="h-4 w-4" fill="none" stroke="#3f98d4">
              <path d="M1 11V3.500l4 7V3" strokeWidth="1.800" />
              <path d="M8.500 0v16" stroke="#666" />
              <path d="M9 15.500 15.500 8" stroke="#999" strokeDasharray="2 1" />
              <path d="M10 2.500c3-.5 4 1 4 3.500M12 4l2 2.500L16 4" strokeWidth="1.300" />
            </svg>
          </button>
          <button aria-label="More tools">
            <Chevron className="h-[6px] w-[8px] text-[#222]" />
          </button>
        </span>
        <span className="ml-[9px] flex">
          <Rule />
        </span>
      </div>

      <div className="flex items-center gap-[9px]">
        173.9758716°E 41.6198805°S
        <button aria-label="Coordinate units">
          <Chevron className="h-[7px] w-[10px] text-[#444]" />
        </button>
      </div>

      <div className="flex flex-1 items-center justify-end gap-[8px] text-[#8c8c8c]">
        <Rule />
        <button className="flex items-center gap-1">
          <svg viewBox="0 0 16 16" className="h-4 w-4" fill="none">
            <path d="M6.500.5h9v10h-4M9.500 1l3 4 2.500-2" stroke="#aaa" />
            <circle cx="5" cy="8.500" r="4.200" fill="#e9f5fb" stroke="#8fc3e0" />
            <path d="M5 6v5M2.500 8.500h5" stroke="#888" />
            <path d="M8 12l3.500 3.500" stroke="#e0bf9c" strokeWidth="2" />
          </svg>
          Selected Features: 0
        </button>
        <Rule />
        <button aria-label="Clear selection">
          <SelTile />
        </button>
        <Rule />
        <button aria-label="Pause drawing">
          <svg viewBox="0 0 12 14" className="h-[14px] w-3" fill="#5c5c5c">
            <path d="M0 0h4v14H0zM7.500 0h4v14h-4z" />
          </svg>
        </button>
        <Rule />
        <button aria-label="Refresh map">
          <svg viewBox="0 0 16 16" className="h-4 w-4" fill="none" stroke="#3f98d4" strokeWidth="2.600">
            <path d="M1.500 6.500C3 1.500 9.500.8 13 4.500M14.500 9.500C13 14.500 6.500 15.200 3 11.500" />
            <path d="M16 .5V7H9.500zM0 15.500V9h6.500z" fill="#3f98d4" stroke="none" />
          </svg>
        </button>
      </div>
    </div>
  );
}

/* ------------------------------------------------------------------ */
/* Chart view                                                          */
/* ------------------------------------------------------------------ */

function Separator() {
  return <span className="h-6 w-[2px] shrink-0 bg-[#cfd1d4]" />;
}

function ToolButton({ icon, children, className = "" }: { icon: ReactNode; children?: ReactNode; className?: string }) {
  return (
    <button className={`flex items-center gap-[2px] whitespace-nowrap ${className}`}>
      {icon}
      {children}
    </button>
  );
}

function FilterFunnel({ children }: { children: ReactNode }) {
  return (
    <svg viewBox="0 0 16 16" className="h-4 w-4" fill="none">
      <path d="M.5 1h12L8 6v8H5V6z" fill="#b9b9b9" stroke="#666" />
      {children}
    </svg>
  );
}

function ChartToolbar() {
  return (
    <div className="flex h-8 items-center border border-[#c8cacd] bg-[#eeeff1] px-[9px] text-[12px] text-[#333]">
      <ToolButton
        icon={
          <svg viewBox="0 0 16 16" className="h-4 w-4" fill="none" stroke="#666">
            <path d="M3 .5H.5v15H9" />
            <path d="M3 3v9h3" stroke="#4fa3da" strokeDasharray="2 1" />
            <path d="M4.500.5h11v8l-3 4h-8z" fill="#fff" />
            <path d="M7 4h6.500M7 6.500h6.500M7 9h4" />
          </svg>
        }
      >
        Properties
      </ToolButton>
      <ToolButton
        className="ml-1 text-[#111]"
        icon={
          <svg viewBox="0 0 16 16" className="h-4 w-4" fill="none">
            <path d="M.5 0v15.500H16" stroke="#666" />
            <path d="M2 7h2.500v8H2z" fill="#e3cf4d" />
            <path d="M5.500 1H8v14H5.500z" fill="#4fa3da" />
            <path d="M9 3.500h2.500V11H9z" fill="#c05a3c" />
            <path d="M8 12.500h4.500V10l3.500 3.300-3.500 2.700v-1.500H8z" fill="#4aa05a" />
          </svg>
        }
      >
        Export
        <svg viewBox="0 0 6 4" className="ml-px h-1 w-[6px]" fill="#777">
          <path d="M0 0h6L3 4z" />
        </svg>
      </ToolButton>
      <span className="mx-[5px] flex">
        <Separator />
      </span>
      <span className="font-semibold">Filter:</span>
      <ToolButton
        className="ml-1"
        icon={
          <FilterFunnel>
            <path d="M8.500 8.500h7v7h-7z" fill="#d9f1fb" stroke="#666" />
            <path d="M10 9l2.500 3L15 10" stroke="#666" />
          </FilterFunnel>
        }
      >
        Selection
      </ToolButton>
      <ToolButton
        className="ml-[6px]"
        icon={
          <FilterFunnel>
            <path d="M8.500 8.500h2v2h-2zM11.500 8.500h2v2h-2zM14.500 8.500H16v2h-1.500zM8.500 11.500h2v2h-2zM14.500 11.500H16v2h-1.500zM8.500 14.500h2V16h-2zM11.500 14.500h2V16h-2zM14.500 14.500H16V16h-1.500z" fill="#4fa3da" />
          </FilterFunnel>
        }
      >
        Extent
      </ToolButton>
      <span className="mx-2 flex">
        <Separator />
      </span>
      <ToolButton icon={<TableIcon />}>Attribute Table</ToolButton>
      <ToolButton
        className="ml-2"
        icon={
          <svg viewBox="0 0 16 16" className="h-4 w-4" fill="none" stroke="#666">
            <path d="M1 1h6v8H1z" fill="#c8ecf8" />
            <path d="M1 2.500V1h7l2 3M5.500 5.500h10v10h-8v-4z" fill="#fff" />
            <path d="M9 6l2 4v5M11 10l4-3" />
            <path d="M9 1.500c2-1.500 4 0 4 2.500M11.500 2.500 13 4.500l2-2M1 11v3h4M3.500 12.500 5 14l-1.500 1.500" />
          </svg>
        }
      >
        Switch Selection
      </ToolButton>
      <ToolButton className="ml-[10px] text-[#a5a5a5]" icon={<SelTile className="mr-[1px] h-[13px] w-[13px]" stroke="#b5b5b5" />}>
        Clear Selection
      </ToolButton>
      <span className="mx-2 flex">
        <Separator />
      </span>
      <ToolButton
        icon={
          <svg viewBox="0 0 16 16" className="h-4 w-4" fill="none">
            <path d="M.5 0v15.500H16" stroke="#666" />
            <path d="M3 3.500c5-.5 7 2 7.500 8M7 8.500l3.500 3.500L13 8" stroke="#4fa3da" strokeWidth="1.400" />
          </svg>
        }
      >
        Rotate Chart
      </ToolButton>
      <span className="mx-[6px] flex">
        <Separator />
      </span>
      <button aria-label="Select" className="flex h-6 w-[22px] items-center justify-center bg-[#9cdcfc]">
        <svg viewBox="0 0 18 16" className="h-4 w-[18px]" fill="none" stroke="#555">
          <path d="M7 .5h10v9H9M12 1l1.500 3.500V9M13.500 4.500 17 3" />
          <path d="M1 1l9.500 8.500-4.500.3 2.500 5-2 .9L4.300 11 1 13.500z" fill="#555" stroke="none" />
        </svg>
      </button>
      <button aria-label="Select options" className="ml-1">
        <Chevron className="h-[5px] w-[7px] text-[#555]" />
      </button>
      <button aria-label="Zoom" className="ml-3">
        <svg viewBox="0 0 16 16" className="h-4 w-4" fill="none">
          <circle cx="6.500" cy="6.500" r="5.500" fill="#fff" stroke="#4fa3da" strokeWidth="1.500" />
          <path d="M6.500 3.500v6M3.500 6.500h6" stroke="#555" strokeWidth="1.600" />
          <path d="M10.500 10.500l5 5" stroke="#b98652" strokeWidth="2.400" />
        </svg>
      </button>
      <button aria-label="Full extent" className="ml-[11px]">
        <svg viewBox="0 0 16 16" className="h-4 w-4" fill="none" stroke="#b5b5b5" strokeWidth="1.400">
          <path d="M1 5V1h4M1 1l5 5M11 1h4v4M15 1l-5 5M1 11v4h4M1 15l5-5M15 11v4h-4M15 15l-5-5" />
        </svg>
      </button>
      <button aria-label="Legend options" className="ml-auto">
        <svg viewBox="0 0 14 16" className="h-4 w-[14px]" fill="none" stroke="#b5b5b5">
          <path d="M5 1.500h9M5 5.500h9M5 9.500h9M5 13.500h9" />
          <path d="M.5.5h2v2h-2zM.5 4.500h2v2h-2zM.5 8.500h2v2h-2zM.5 12.500h2v2h-2z" />
        </svg>
      </button>
      <button aria-label="Legend menu" className="ml-[9px]">
        <Chevron className="h-[5px] w-[7px] text-[#333]" />
      </button>
    </div>
  );
}

const campgrounds = [
  { name: "A1 Ward Motel & Campground", hectares: 72.48 },
  { name: "Awatere Settlers Motor Camp", hectares: 83.57 },
  { name: "Blenheim TOP 10 Holiday Park", hectares: 0.25 },
  { name: "Chartridge Park", hectares: 0.68 },
];
const ticks = [0, 10, 20, 30, 40, 50, 60, 70, 80];
const BASE_Y = 289;
const yOf = (v: number) => BASE_Y - v * 3.3;

function Chart() {
  return (
    <figure className="flex-1 overflow-hidden bg-white text-[#444]">
      <figcaption className="h-8 text-center text-[20px] leading-8">Nassella Tussock Near Commercial Campgrounds</figcaption>
      <div className="flex">
        <div className="flex w-[72px] shrink-0 items-start justify-center pt-[60px]">
          <span className="rotate-180 text-[15px] whitespace-nowrap [writing-mode:vertical-rl]">Range of plant in hectares</span>
        </div>
        <svg className="mr-[92px] ml-5 h-[320px] flex-1 overflow-visible" role="img" aria-label="Bar chart of tussock range by campground">
          {ticks.map((t) => (
            <g key={t}>
              <line x1="0" x2="100%" y1={yOf(t)} y2={yOf(t)} stroke={t === 0 ? "#c9c9c9" : "#f1f1f1"} strokeWidth="2" shapeRendering="crispEdges" />
              <text x="-13" y={yOf(t) + 6} textAnchor="end" fontSize="13" fill="#444">
                {t}
              </text>
            </g>
          ))}
          {campgrounds.map((c, i) => {
            const mid = 12.5 + i * 25;
            const top = yOf(c.hectares);
            return (
              <g key={c.name}>
                <line x1={`${mid}%`} x2={`${mid}%`} y1={BASE_Y} y2={BASE_Y + 4} stroke="#c9c9c9" strokeWidth="1.500" />
                <rect
                  x={`${mid - 8.75}%`}
                  y={top}
                  width="17.5%"
                  height={BASE_Y - top}
                  fill="#8500a7"
                  fillOpacity=".71"
                  stroke="#8a14ab"
                  strokeWidth="1.200"
                />
                <text x={`${mid}%`} y={top - 5} textAnchor="middle" fontSize="12" fill="#444">
                  {c.hectares}
                </text>
                <text x={`${mid}%`} y={BASE_Y + 23} textAnchor="middle" fontSize="13" fill="#444">
                  {c.name}
                </text>
              </g>
            );
          })}
        </svg>
      </div>
      <p className="pl-[14px] text-center text-[15px] leading-[22px] whitespace-nowrap">Campground Name</p>
    </figure>
  );
}

/* ------------------------------------------------------------------ */
/* Window                                                              */
/* ------------------------------------------------------------------ */

export default function App() {
  return (
    <div className="flex h-screen overflow-hidden bg-[#ebebeb] font-['Open_Sans','Noto_Sans',sans-serif] leading-none text-[#444]">
      <ContentsPane />

      <main className="ml-[6px] flex min-w-0 flex-1 flex-col">
        <div className="flex h-[26px] items-end justify-between border-b-2 border-[#007ac6] pt-[2px]">
          <div className="flex h-full items-center rounded-t-[4px] bg-[#007ac6] px-[6px] pt-[2px] text-[12px] text-white">
            <MapTile className="h-[15px] w-[15px]" />
            <span className="ml-[6px]">Marlborough</span>
            <button aria-label="Close map" className="ml-[7px]">
              <Cross className="h-[10px] w-[10px] text-white" />
            </button>
          </div>
          <button aria-label="Map tabs" className="mr-[5px] mb-[7px]">
            <Chevron className="h-[6px] w-[8px] text-[#555]" />
          </button>
        </div>

        <section className="border-x border-t border-[#c9ccd1]">
          <MapCanvas />
          <MapStatusBar />
        </section>

        <div className="flex h-[31px] items-end border-b-[3px] border-[#d2d4d9] pr-[5px] pl-[5px] text-[12px]">
          <button className="flex h-[22px] items-center gap-[5px] pt-[2px] text-[#111]">
            <TableIcon />
            Tussock_Within_Buffers
          </button>
          <div className="ml-[18px] flex h-[22px] items-center rounded-t-[4px] bg-[#d2d4d9] px-[6px] pt-[2px]">
            <ColumnsIcon className="h-4 w-4" />
            <span className="ml-1">Tussock_Within_Buffe...ial Campgrounds</span>
            <button aria-label="Close chart" className="ml-2">
              <Cross className="h-[10px] w-[10px] text-[#555]" />
            </button>
          </div>
          <button aria-label="Chart tabs" className="mb-[7px] ml-auto">
            <Chevron className="h-[6px] w-[8px] text-[#555]" />
          </button>
        </div>

        <section className="flex min-h-0 flex-1 flex-col border-x border-[#c9ccd1]">
          <ChartToolbar />
          <Chart />
        </section>
      </main>

      <div className="mt-1 mb-4 ml-[5px] w-[2px] shrink-0 bg-[#dcdcdc]" />
    </div>
  );
}
